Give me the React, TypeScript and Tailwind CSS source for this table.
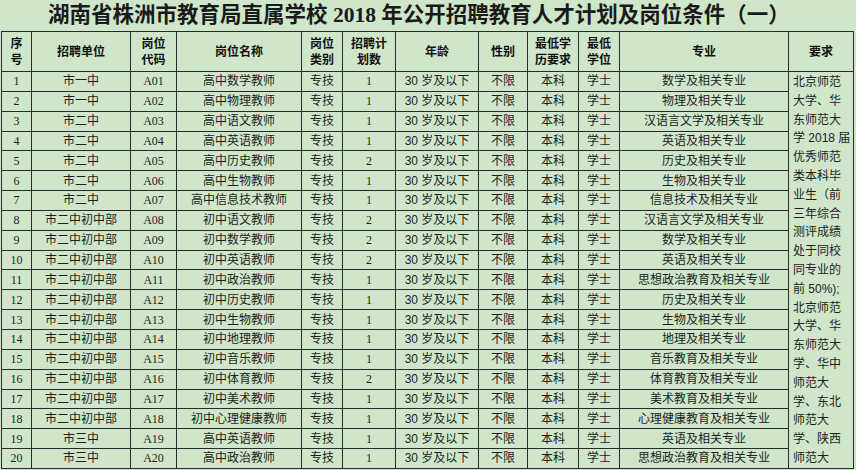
import React from "react";

const rows: [string, string, string, string, string, string][] = [
  ["1", "市一中", "A01", "高中数学教师", "1", "数学及相关专业"],
  ["2", "市一中", "A02", "高中物理教师", "1", "物理及相关专业"],
  ["3", "市二中", "A03", "高中语文教师", "1", "汉语言文学及相关专业"],
  ["4", "市二中", "A04", "高中英语教师", "1", "英语及相关专业"],
  ["5", "市二中", "A05", "高中历史教师", "2", "历史及相关专业"],
  ["6", "市二中", "A06", "高中生物教师", "1", "生物及相关专业"],
  ["7", "市二中", "A07", "高中信息技术教师", "1", "信息技术及相关专业"],
  ["8", "市二中初中部", "A08", "初中语文教师", "2", "汉语言文学及相关专业"],
  ["9", "市二中初中部", "A09", "初中数学教师", "2", "数学及相关专业"],
  ["10", "市二中初中部", "A10", "初中英语教师", "2", "英语及相关专业"],
  ["11", "市二中初中部", "A11", "初中政治教师", "1", "思想政治教育及相关专业"],
  ["12", "市二中初中部", "A12", "初中历史教师", "1", "历史及相关专业"],
  ["13", "市二中初中部", "A13", "初中生物教师", "1", "生物及相关专业"],
  ["14", "市二中初中部", "A14", "初中地理教师", "1", "地理及相关专业"],
  ["15", "市二中初中部", "A15", "初中音乐教师", "1", "音乐教育及相关专业"],
  ["16", "市二中初中部", "A16", "初中体育教师", "2", "体育教育及相关专业"],
  ["17", "市二中初中部", "A17", "初中美术教师", "1", "美术教育及相关专业"],
  ["18", "市二中初中部", "A18", "初中心理健康教师", "1", "心理健康教育及相关专业"],
  ["19", "市三中", "A19", "高中英语教师", "1", "英语及相关专业"],
  ["20", "市三中", "A20", "高中政治教师", "1", "思想政治教育及相关专业"],
];

const reqLines = [
  "北京师范",
  "大学、华",
  "东师范大",
  "学 2018 届",
  "优秀师范",
  "类本科毕",
  "业生（前",
  "三年综合",
  "测评成绩",
  "处于同校",
  "同专业的",
  "前 50%);",
  "北京师范",
  "大学、华",
  "东师范大",
  "学、华中",
  "师范大",
  "学、东北",
  "师范大",
  "学、陕西",
  "师范大",
];

const cell =
  "border-r border-b border-[#2a2a2a] flex items-center justify-center text-center overflow-hidden whitespace-nowrap";
const head = `${cell} font-bold text-[12px] leading-[16px] text-[#111]`;
const body = `${cell} text-[12px] text-[#1e1e1e]`;
const serif = { fontFamily: '"Liberation Serif","Noto Sans CJK SC",serif' };
const sans = { fontFamily: '"Liberation Sans","Noto Sans CJK SC",sans-serif' };

export default function App() {
  return (
    <div
      className="w-[856px] h-[470px] bg-[#cfe6ca] overflow-hidden"
      style={sans}
    >
      <div className="h-[31px] flex items-center justify-center pr-[18px]">
        <h1
          className="text-[21.5px] font-bold text-[#1a1a1a] leading-none"
          style={{ fontFamily: '"Liberation Serif","Noto Sans CJK SC",serif' }}
        >
          湖南省株洲市教育局直属学校 2018 年公开招聘教育人才计划及岗位条件（一）
        </h1>
      </div>
      <div className="ml-px w-[853px] grid grid-cols-[30px_99px_46px_125px_41px_53px_83px_49px_51px_41px_169px_65px] grid-rows-[40px_repeat(20,19.85px)] border-l border-t border-[#2a2a2a]">
        <div className={head}>
          序<br />号
        </div>
        <div className={head}>招聘单位</div>
        <div className={head}>
          岗位<br />代码
        </div>
        <div className={head}>岗位名称</div>
        <div className={head}>
          岗位<br />类别
        </div>
        <div className={head}>
          招聘计<br />划数
        </div>
        <div className={head}>年龄</div>
        <div className={head}>性别</div>
        <div className={head}>
          最低学<br />历要求
        </div>
        <div className={head}>
          最低<br />学位
        </div>
        <div className={head}>专业</div>
        <div className={head}>要求</div>

        <div className="col-start-12 row-start-2 row-end-22 border-r border-b border-[#2a2a2a] overflow-hidden pl-[4px] pt-px text-[12px] leading-[18.8px] text-[#1e1e1e] text-left">
          {reqLines.map((l, i) => (
            <div key={i} className="whitespace-nowrap">
              {l}
            </div>
          ))}
        </div>

        {rows.map((r) => (
          <React.Fragment key={r[0]}>
            <div className={body} style={serif}>
              {r[0]}
            </div>
            <div className={body}>{r[1]}</div>
            <div className={body} style={serif}>
              {r[2]}
            </div>
            <div className={body}>{r[3]}</div>
            <div className={body}>专技</div>
            <div className={body} style={serif}>
              {r[4]}
            </div>
            <div className={body}>30 岁及以下</div>
            <div className={body}>不限</div>
            <div className={body}>本科</div>
            <div className={body}>学士</div>
            <div className={body}>{r[5]}</div>
          </React.Fragment>
        ))}
      </div>
    </div>
  );
}
